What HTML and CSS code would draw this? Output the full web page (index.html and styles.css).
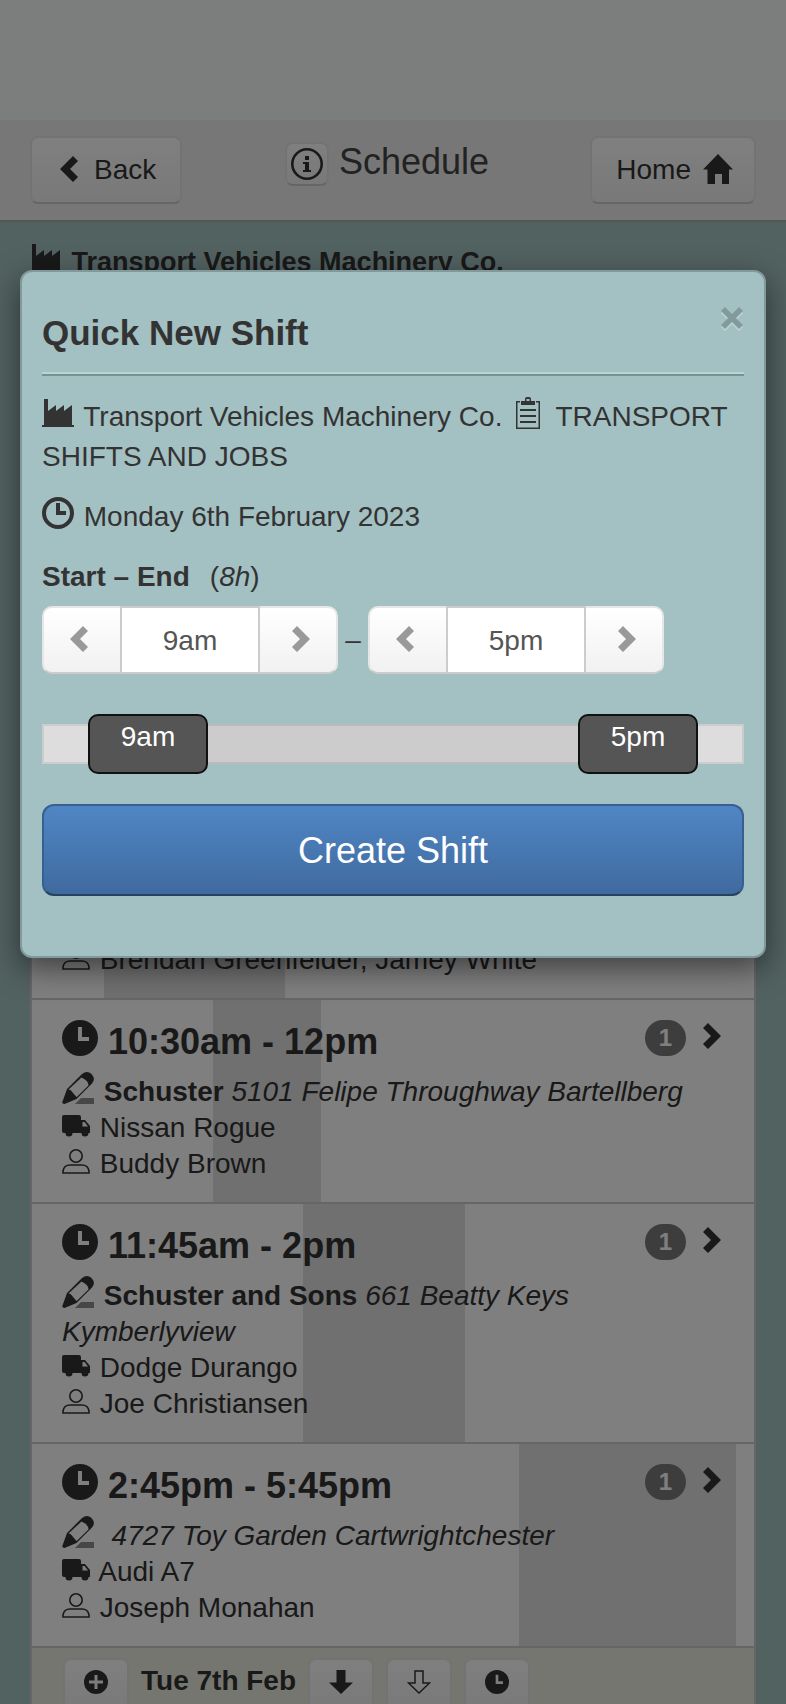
FILE: index.html
```html
<!DOCTYPE html>
<html lang="en">
<head>
<meta charset="utf-8">
<meta name="viewport" content="width=device-width, initial-scale=1">
<title>Schedule</title>
<link rel="stylesheet" href="styles.css">
</head>
<body>
<svg class="sprite" aria-hidden="true">
  <symbol id="chevron-left" viewBox="0 0 18 26"><path d="M13 0l5 5-8 8 8 8-5 5L0 13z"/></symbol>
  <symbol id="chevron-right" viewBox="0 0 18 26"><path d="M5 0L0 5l8 8-8 8 5 5 13-13z"/></symbol>
  <symbol id="home" viewBox="0 0 30 30"><path d="M15 0l15 15.500h-4V30h-7V20h-7v10H4.500V15.500H0z"/></symbol>
  <symbol id="info" viewBox="0 0 32 32"><circle cx="16" cy="16" r="14.700" fill="none" stroke="currentColor" stroke-width="2.600"/><path d="M14 8h4v4h-4zM12 14h6v8h2v2h-8v-2h2v-6h-2z"/></symbol>
  <symbol id="factory" viewBox="0 0 32 28"><path d="M2 0h4v12l8-6v6l8-6v6l8-6v20h2v2H0v-2h2z"/></symbol>
  <symbol id="clipboard" viewBox="0 0 32 32"><path fill-rule="evenodd" d="M4 4h4v1.500H5.500v25h21v-25H24V4h4v28H4zM9 8V4h4V2q0-2 2-2h2q2 0 2 2v2h4v4zM14.500 4h3V2h-3zM8 12h16v2H8zM8 18h16v2H8zM8 24h16v2H8z"/></symbol>
  <symbol id="clock" viewBox="0 0 32 32"><circle cx="16" cy="16" r="14" fill="none" stroke="currentColor" stroke-width="4"/><path d="M14 6h4v8h6v4H14z"/></symbol>
  <symbol id="clock-solid" viewBox="0 0 36 36"><path fill-rule="evenodd" d="M18 0a18 18 0 1 1 0 36a18 18 0 0 1 0-36zM16 7v14h11v-4h-7V7z"/></symbol>
  <symbol id="pencil" viewBox="0 0 32 32"><path fill-rule="evenodd" d="M20 2q5-4 9.500 0q4.500 5 .500 9.500L14.500 27 2.500 32q-3 0-2-2.500L5 17zM6.500 17.500l2 0.500 6 7 .500-.300L26.500 13.500q0-5-7-8z"/><path opacity=".55" d="M19 26h13v6H13z"/></symbol>
  <symbol id="truck" viewBox="0 0 28 24"><path fill-rule="evenodd" d="M2 1h15q2 0 2 2v3h4l5 6v7h-1.500a3.500 3.500 0 1 1-7 0h-9a3.500 3.500 0 1 1-7 0H2q-2 0-2-2V3q0-2 2-2zM20.500 8v4.500H26L22.500 8z"/></symbol>
  <symbol id="user" viewBox="0 0 28 26"><g fill="none" stroke="currentColor" stroke-width="1.600"><circle cx="14" cy="8" r="6.200"/><path d="M1 25v-2q1-6 7-6h12q6 0 7 6v2z"/></g></symbol>
  <symbol id="plus-circle" viewBox="0 0 24 24"><path fill-rule="evenodd" d="M12 0a12 12 0 1 1 0 24a12 12 0 0 1 0-24zM10.500 5v5.500H5v3h5.500V19h3v-5.500H19v-3h-5.500V5z"/></symbol>
  <symbol id="arrow-down" viewBox="0 0 24 24"><path d="M7.500 0h9v12.500H24L12 24 0 12.500h7.500z"/></symbol>
  <symbol id="arrow-outline" viewBox="0 0 24 24"><path fill="none" stroke="currentColor" stroke-width="1.500" d="M8 1h8v12h6.500L12 23 1.500 13H8z"/></symbol>
  <symbol id="cross" viewBox="0 0 22 22"><path d="M4 0l7 7 7-7 4 4-7 7 7 7-4 4-7-7-7 7-4-4 7-7-7-7z"/></symbol>
</svg>

<div class="screen">
  <div class="status-area"></div>
  <header class="topbar">
    <button class="btn nav-btn nav-back" type="button"><svg class="icon chevron"><use href="#chevron-left"/></svg>Back</button>
    <h1 class="page-title"><button class="btn info-btn" type="button" aria-label="Information"><svg class="icon s32"><use href="#info"/></svg></button>Schedule</h1>
    <button class="btn nav-btn nav-home" type="button">Home<svg class="icon s30"><use href="#home"/></svg></button>
  </header>

  <main class="content">
    <h2 class="company"><svg class="icon factory"><use href="#factory"/></svg> Transport Vehicles Machinery Co.</h2>

    <div class="list">
      <article class="shift shift-tall">
        <div class="span-bar" style="--start:10%;--span:25%"></div>
        <p class="line"><svg class="icon user"><use href="#user"/></svg> Brendan Greenfelder, Jamey White</p>
      </article>

      <article class="shift">
        <div class="span-bar" style="--start:25%;--span:15%"></div>
        <div class="shift-head">
          <h3 class="shift-time"><svg class="icon s36"><use href="#clock-solid"/></svg> 10:30am - 12pm</h3>
          <span class="badge">1</span>
          <svg class="icon chevron"><use href="#chevron-right"/></svg>
        </div>
        <p class="line"><svg class="icon s32"><use href="#pencil"/></svg> <strong>Schuster</strong> <em>5101 Felipe Throughway Bartellberg</em></p>
        <p class="line"><svg class="icon truck"><use href="#truck"/></svg> Nissan Rogue</p>
        <p class="line"><svg class="icon user"><use href="#user"/></svg> Buddy Brown</p>
      </article>

      <article class="shift">
        <div class="span-bar" style="--start:37.5%;--span:22.5%"></div>
        <div class="shift-head">
          <h3 class="shift-time"><svg class="icon s36"><use href="#clock-solid"/></svg> 11:45am - 2pm</h3>
          <span class="badge">1</span>
          <svg class="icon chevron"><use href="#chevron-right"/></svg>
        </div>
        <p class="line"><svg class="icon s32"><use href="#pencil"/></svg> <strong>Schuster and Sons</strong> <em>661 Beatty Keys Kymberlyview</em></p>
        <p class="line"><svg class="icon truck"><use href="#truck"/></svg> Dodge Durango</p>
        <p class="line"><svg class="icon user"><use href="#user"/></svg> Joe Christiansen</p>
      </article>

      <article class="shift">
        <div class="span-bar" style="--start:67.5%;--span:30%"></div>
        <div class="shift-head">
          <h3 class="shift-time"><svg class="icon s36"><use href="#clock-solid"/></svg> 2:45pm - 5:45pm</h3>
          <span class="badge">1</span>
          <svg class="icon chevron"><use href="#chevron-right"/></svg>
        </div>
        <p class="line"><svg class="icon s32"><use href="#pencil"/></svg> &nbsp;<em>4727 Toy Garden Cartwrightchester</em></p>
        <p class="line"><svg class="icon truck"><use href="#truck"/></svg> Audi A7</p>
        <p class="line"><svg class="icon user"><use href="#user"/></svg> Joseph Monahan</p>
      </article>

      <div class="day-bar">
        <button class="btn day-btn" type="button" aria-label="Add shift"><svg class="icon s24"><use href="#plus-circle"/></svg></button>
        <h3 class="day-name">Tue 7th Feb</h3>
        <button class="btn day-btn" type="button" aria-label="Copy down"><svg class="icon s24"><use href="#arrow-down"/></svg></button>
        <button class="btn day-btn" type="button" aria-label="Move down"><svg class="icon s24"><use href="#arrow-outline"/></svg></button>
        <button class="btn day-btn" type="button" aria-label="Set time"><svg class="icon s24"><use href="#clock-solid"/></svg></button>
      </div>
    </div>
  </main>

  <div class="backdrop"></div>

  <section class="modal" role="dialog" aria-labelledby="modal-title">
    <header class="modal-head">
      <h2 class="modal-title" id="modal-title">Quick New Shift</h2>
      <button class="close" type="button" aria-label="Close"><svg class="icon cross"><use href="#cross"/></svg></button>
    </header>
    <p class="para"><svg class="icon factory"><use href="#factory"/></svg> Transport Vehicles Machinery Co. <svg class="icon s32 clip"><use href="#clipboard"/></svg> TRANSPORT SHIFTS AND JOBS</p>
    <p class="para"><svg class="icon s32"><use href="#clock"/></svg> Monday 6th February 2023</p>
    <div class="range-label"><label for="start"><strong>Start – End</strong></label> <span>(<em>8h</em>)</span></div>
    <div class="time-range">
      <div class="stepper">
        <button class="btn step" type="button" aria-label="Earlier start"><svg class="icon chevron"><use href="#chevron-left"/></svg></button>
        <input class="time" id="start" type="text" value="9am">
        <button class="btn step" type="button" aria-label="Later start"><svg class="icon chevron"><use href="#chevron-right"/></svg></button>
      </div>
      <span class="dash">–</span>
      <div class="stepper">
        <button class="btn step" type="button" aria-label="Earlier end"><svg class="icon chevron"><use href="#chevron-left"/></svg></button>
        <input class="time" type="text" value="5pm" aria-label="End">
        <button class="btn step" type="button" aria-label="Later end"><svg class="icon chevron"><use href="#chevron-right"/></svg></button>
      </div>
    </div>
    <div class="slider" style="--from:.079;--to:.921">
      <div class="track"></div>
      <div class="track-fill"></div>
      <input class="thumb" id="slide-start" type="range" min="8.25" max="17.75" step="0.25" value="9" aria-label="Start time">
      <input class="thumb" id="slide-end" type="range" min="8.25" max="17.75" step="0.25" value="17" aria-label="End time">
      <output class="thumb-text at-from" for="slide-start">9am</output>
      <output class="thumb-text at-to" for="slide-end">5pm</output>
    </div>
    <button class="primary" type="button">Create Shift</button>
  </section>
</div>
</body>
</html>
```

FILE: styles.css
```css
* { box-sizing: border-box; }

body {
  margin: 0;
  font: 28px/36px "Liberation Sans", Arial, sans-serif;
  color: #333;
}

h1, h2, h3, p { margin: 0; }
button, input { font: inherit; color: inherit; }

.sprite { position: absolute; width: 0; height: 0; }

.icon { fill: currentColor; flex: none; margin: -8px 2px 0 0; vertical-align: -1px; overflow: visible; }
.s24 { width: 24px; height: 24px; }
.s30 { width: 30px; height: 30px; }
.s32 { width: 32px; height: 32px; vertical-align: -3px; }
.s36 { width: 36px; height: 36px; margin-right: 0; vertical-align: -2px; }
.chevron { width: 18px; height: 26px; }
.factory { width: 32px; height: 28px; }
.truck { width: 28px; height: 24px; }
.user { width: 28px; height: 26px; }
.cross { width: 22px; height: 22px; }
.clip { margin: -8px 4px 0 2px; }

.screen {
  position: relative;
  height: 100vh;
  overflow: hidden;
  background: #a5c4c2;
}

.status-area { height: 120px; background: #f7fcfa; }

.btn {
  display: flex;
  align-items: center;
  justify-content: center;
  padding: 0;
  border: 2px solid #e6e6e6;
  border-bottom-color: #ccc;
  border-radius: 8px;
  background: linear-gradient(#fff, #f1f1f1);
}
.btn .icon { margin: 0; }

.topbar {
  display: grid;
  grid-template-columns: 1fr auto 1fr;
  align-items: start;
  padding: 16px 30px;
  border-bottom: 2px solid #aaa;
  background: #eee;
}
.nav-btn { height: 68px; }
.nav-back { justify-self: start; gap: 16px; padding: 0 24px 0 28px; }
.nav-home { justify-self: end; gap: 12px; padding: 0 21px 0 24px; }
.nav-btn .icon { margin-bottom: 2px; }
.topbar .btn { background: linear-gradient(#fff, #f2f2f2); }

.page-title {
  display: flex;
  gap: 10px;
  padding: 6px 12px 0 0;
  font-size: 36px;
  font-weight: normal;
  line-height: 40px;
  color: #444;
}
.info-btn { width: 44px; height: 44px; color: #333; }

.content { padding: 22px 30px 0; }

.company { font-size: 27px; line-height: 36px; }

.list { margin-top: 20px; border: 2px solid #ccc; background: #fff; }

.shift { position: relative; padding: 20px 30px; border-bottom: 2px solid #ccc; }
.shift-tall { display: flex; flex-direction: column; justify-content: flex-end; min-height: 698px; }

.span-bar {
  position: absolute;
  top: 0;
  bottom: 0;
  left: var(--start);
  width: var(--span);
  background: #e0e0e0;
}

.shift-head { position: relative; display: flex; align-items: flex-start; margin-bottom: 12px; }
.shift-time { flex: 1; padding-top: 2px; font-size: 36px; line-height: 40px; }
.shift-head > .chevron { margin: 3px 3px 0 17px; }

.badge {
  padding: 0 14px;
  border-radius: 18px;
  background: #7a7a7a;
  color: #fff;
  font-size: 24px;
  font-weight: bold;
}

.line { position: relative; }

.day-bar { display: flex; gap: 12px; padding: 10px 31px; background: #ecede0; }
.day-btn { width: 66px; height: 60px; border-color: #e6e6e6; }
.day-btn .icon { margin-bottom: 12px; }
.day-name { padding-top: 5px; font-size: 28px; line-height: 36px; }

.backdrop { position: absolute; inset: 0; background: rgba(0, 0, 0, .5); }

.modal {
  position: absolute;
  top: 270px;
  left: 20px;
  right: 20px;
  padding: 20px 20px 60px;
  border: 2px solid #82999b;
  border-radius: 12px;
  background: #a3c0c2;
  box-shadow: 0 10px 30px rgba(0, 0, 0, .5);
  line-height: 40px;
}

.modal-head {
  display: flex;
  align-items: flex-start;
  justify-content: space-between;
  margin-bottom: 21px;
  padding: 20px 0 20px;
  border-bottom: 2px solid #779293;
  box-shadow: inset 0 -2px #bcd3d4;
}
.modal-title { font-size: 35px; line-height: 42px; }

.close {
  display: flex;
  padding: 0 1px;
  border: 0;
  background: none;
  color: #839a9c;
}
.close .icon { margin: -5px 0 0; filter: drop-shadow(0 2px 0 #bfd5d6); }

.para { margin-bottom: 20px; }

.range-label { display: flex; gap: 20px; margin-bottom: 9px; }

.time-range { display: flex; align-items: center; }
.dash { width: 30px; text-align: center; }

.stepper { display: flex; height: 68px; }
.step { width: 78px; color: #999; }
.step .icon { margin-bottom: 2px; }
.step:first-child { padding-right: 6px; border-right: 0; border-radius: 10px 0 0 10px; }
.step:last-child { padding-left: 6px; border-left: 0; border-radius: 0 10px 10px 0; }
.time {
  width: 140px;
  padding: 2px 0 0;
  border: 2px solid #ccc;
  border-radius: 0;
  background: #fff;
  color: #555;
  text-align: center;
}

.slider { position: relative; display: grid; align-items: center; height: 60px; margin: 40px 0 30px; }
.slider > * { grid-area: 1 / 1; }
.track { height: 40px; border: 2px solid #ccc; background: #ddd; }
.track-fill {
  height: 40px;
  margin: 0 calc(120px + (100% - 120px) * (1 - var(--to)));
  border: 2px solid #bbb;
  border-width: 2px 0;
  background: #ccc;
}

.thumb {
  width: 100%;
  height: 60px;
  margin: 0;
  background: none;
  appearance: none;
  -webkit-appearance: none;
  pointer-events: none;
}
.thumb::-webkit-slider-thumb {
  -webkit-appearance: none;
  width: 120px;
  height: 60px;
  border: 2px solid #111;
  border-radius: 10px;
  background: #555;
  pointer-events: auto;
}

.thumb-text {
  position: relative;
  align-self: start;
  width: 120px;
  padding-top: 3px;
  color: #fff;
  text-align: center;
  pointer-events: none;
}
.at-from { margin-left: calc((100% - 120px) * var(--from)); }
.at-to { margin-left: calc((100% - 120px) * var(--to)); }

.primary {
  display: block;
  width: 100%;
  padding: 25px 24px 23px;
  border: 2px solid #365f92;
  border-bottom-color: #26425f;
  border-radius: 12px;
  background: linear-gradient(#5086c4, #3f6a9f);
  color: #fff;
  font-size: 36px;
  line-height: 40px;
}
```
